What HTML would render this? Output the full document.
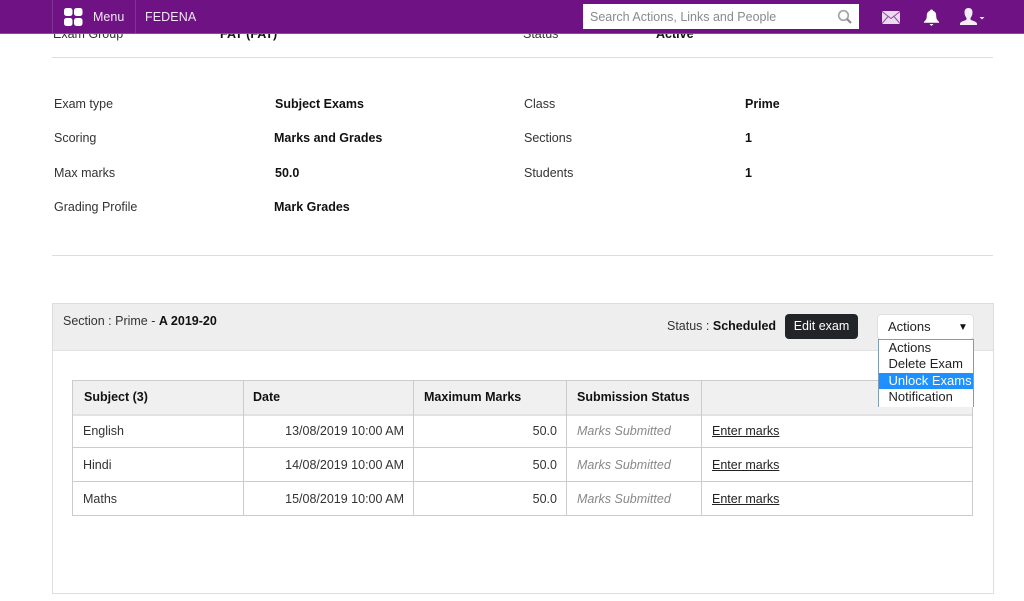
<!DOCTYPE html>
<html><head><meta charset="utf-8"><style>
html,body{margin:0;padding:0;background:#fff}
body{width:1024px;height:601px;overflow:hidden;position:relative;font-family:"Liberation Sans",Arial,sans-serif;font-size:12.5px;color:#333}
.t{position:absolute;white-space:nowrap;line-height:16px}
.b{font-weight:bold;color:#111}
.l{position:absolute;background:#ccc}
.r{text-align:right}
.h{position:absolute;background:#ddd;height:1px}
a{color:#222;text-decoration:underline}
</style></head><body>
<div class="t" style="left:53px;top:26px">Exam Group</div>
<div class="t b" style="left:220px;top:26px">FAT (FAT)</div>
<div class="t" style="left:523px;top:26px">Status</div>
<div class="t b" style="left:656px;top:26px">Active</div>
<div style="position:absolute;left:0;top:0;width:1024px;height:33px;background:#6f1283;border-bottom:1px solid #8d4a9c"></div>
<div style="position:absolute;left:52px;top:0;width:82px;height:33px;border-left:1px solid #7f3392;border-right:1px solid #7f3392"></div>
<svg style="position:absolute;left:64px;top:8px" width="19" height="18"><rect x="0" y="0" width="8.500" height="8" rx="2.500" fill="#fff"/><rect x="10" y="0" width="8.500" height="8" rx="2.500" fill="#fff"/><rect x="0" y="10" width="8.500" height="8" rx="2.500" fill="#fff"/><rect x="10" y="10" width="8.500" height="8" rx="2.500" fill="#fff"/></svg>
<div class="t" style="left:93px;top:9px;color:#f3e6f5">Menu</div>
<div class="t" style="left:145px;top:9px;color:#f3e6f5;letter-spacing:.1px">FEDENA</div>
<div style="position:absolute;left:583px;top:4px;width:276px;height:25px;background:#fff"></div>
<div class="t" style="left:590px;top:9px;color:#8a8a8a">Search Actions, Links and People</div>
<svg style="position:absolute;left:837px;top:9px" width="16" height="16"><circle cx="6.500" cy="6.500" r="4.800" fill="none" stroke="#a5a5a5" stroke-width="1.700"/><path d="M10 10l4 4" stroke="#8c8c8c" stroke-width="2.200"/></svg>
<svg style="position:absolute;left:882px;top:11px" width="18" height="13"><rect width="18" height="13" rx="1" fill="#eadcee"/><path d="M0 .5l9 7 9-7M0 12.500l6-7M18 12.500l-6-7" fill="none" stroke="#8f4aa0" stroke-width="1"/></svg>
<svg style="position:absolute;left:923px;top:9px" width="17" height="17"><path d="M8.500 0.500c1 0 1.500 .7 1.500 1.300c2.300 .7 3.200 2.500 3.200 5c0 3 1 4.500 2.800 6v1H1v-1c1.800-1.500 2.800-3 2.800-6c0-2.500 .9-4.300 3.200-5c0-.6 .5-1.300 1.500-1.300z" fill="#fff"/><path d="M6.500 15h4l-2 2z" fill="#fff"/></svg>
<svg style="position:absolute;left:960px;top:8px" width="25" height="17"><path d="M8.500 0c3 0 4 2 4 4.500c0 2.500-1 4-2 5.500v1.500c1.500 1.500 5.500 1.500 6.500 4v1.500H0v-1.500c1-2.500 5-2.500 6.500-4V10C5.500 8.500 4.500 7 4.500 4.500C4.500 2 5.500 0 8.500 0z" fill="#f4ecf6"/><path d="M19.500 9h5l-2.500 2.500z" fill="#f0e4f2"/></svg>

<div class="h" style="left:52px;top:57px;width:941px"></div>
<div class="t" style="left:54px;top:96px">Exam type</div>
<div class="t b" style="left:275px;top:96px">Subject Exams</div>
<div class="t" style="left:524px;top:96px">Class</div>
<div class="t b" style="left:745px;top:96px">Prime</div>
<div class="t" style="left:54px;top:130px">Scoring</div>
<div class="t b" style="left:274px;top:130px">Marks and Grades</div>
<div class="t" style="left:524px;top:130px">Sections</div>
<div class="t b" style="left:745px;top:130px">1</div>
<div class="t" style="left:54px;top:165px">Max marks</div>
<div class="t b" style="left:275px;top:165px">50.0</div>
<div class="t" style="left:524px;top:165px">Students</div>
<div class="t b" style="left:745px;top:165px">1</div>
<div class="t" style="left:54px;top:199px">Grading Profile</div>
<div class="t b" style="left:274px;top:199px">Mark Grades</div>
<div class="h" style="left:52px;top:255px;width:941px"></div>

<div style="position:absolute;left:52px;top:303px;width:940px;height:289px;border:1px solid #ddd"></div>
<div style="position:absolute;left:53px;top:304px;width:940px;height:46px;background:#eee;border-bottom:1px solid #e2e2e2"></div>
<div class="t" style="left:63px;top:313px">Section : Prime - <span class="b">A 2019-20</span></div>
<div class="t" style="left:667px;top:318px">Status : <span class="b">Scheduled</span></div>
<div class="t" style="left:785px;top:314px;width:73px;height:25px;line-height:24px;background:#212529;border-radius:4px;color:#fff;text-align:center">Edit exam</div>
<div class="t" style="left:877px;top:314px;width:95px;height:24px;line-height:24px;background:#fff;border:1px solid #e0e0e0;border-radius:4px"><span style="position:absolute;left:10px;color:#222;font-size:13px">Actions</span><span style="position:absolute;left:80px;top:1px;font-size:10px;color:#111">&#9660;</span></div>

<div style="position:absolute;left:72px;top:380px;width:899px;height:134px;border:1px solid #ccc"></div>
<div style="position:absolute;left:73px;top:381px;width:899px;height:33px;background:#f0f0f0"></div>
<div class="h" style="left:73px;top:414px;width:899px;height:2px;background:#e2e2e2"></div>
<div class="h" style="left:73px;top:447px;width:899px;background:#ccc"></div>
<div class="h" style="left:73px;top:481px;width:899px;background:#ccc"></div>
<div class="l" style="left:243px;top:380px;width:1px;height:136px"></div>
<div class="l" style="left:413px;top:380px;width:1px;height:136px"></div>
<div class="l" style="left:566px;top:380px;width:1px;height:136px"></div>
<div class="l" style="left:701px;top:380px;width:1px;height:136px"></div>

<div class="t b" style="left:84px;top:389px">Subject (3)</div>
<div class="t b" style="left:253px;top:389px">Date</div>
<div class="t b" style="left:424px;top:389px">Maximum Marks</div>
<div class="t b" style="left:577px;top:389px">Submission Status</div>

<div class="t" style="left:83px;top:423px">English</div>
<div class="t r" style="right:620px;top:423px">13/08/2019 10:00 AM</div>
<div class="t r" style="right:467px;top:423px">50.0</div>
<div class="t" style="left:577px;top:423px;color:#888;font-style:italic">Marks Submitted</div>
<div class="t" style="left:712px;top:423px"><a>Enter marks</a></div>

<div class="t" style="left:83px;top:457px">Hindi</div>
<div class="t r" style="right:620px;top:457px">14/08/2019 10:00 AM</div>
<div class="t r" style="right:467px;top:457px">50.0</div>
<div class="t" style="left:577px;top:457px;color:#888;font-style:italic">Marks Submitted</div>
<div class="t" style="left:712px;top:457px"><a>Enter marks</a></div>

<div class="t" style="left:83px;top:491px">Maths</div>
<div class="t r" style="right:620px;top:491px">15/08/2019 10:00 AM</div>
<div class="t r" style="right:467px;top:491px">50.0</div>
<div class="t" style="left:577px;top:491px;color:#888;font-style:italic">Marks Submitted</div>
<div class="t" style="left:712px;top:491px"><a>Enter marks</a></div>

<div style="position:absolute;left:878px;top:339px;width:94px;height:67px;background:#fff;border:1px solid #7f9db9;border-bottom:none;color:#222;font-size:13px;line-height:16.250px;overflow:hidden">
<div style="padding-left:9.500px">Actions</div>
<div style="padding-left:9.500px">Delete Exam</div>
<div style="padding-left:9.500px;background:#1e90ff;color:#fff;white-space:nowrap">Unlock Exams</div>
<div style="padding-left:9.500px">Notification</div>
</div>
</body></html>
